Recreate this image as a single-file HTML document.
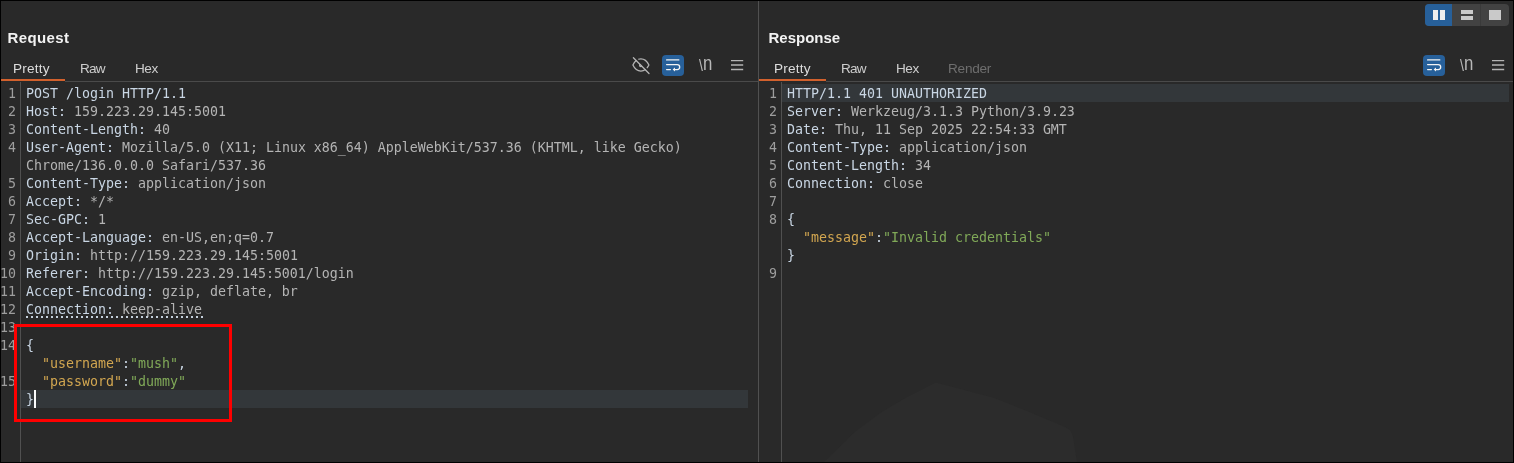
<!DOCTYPE html>
<html lang="en">
<head>
<meta charset="utf-8">
<title>Request / Response</title>
<style>
html,body{margin:0;padding:0;}
body{width:1514px;height:463px;overflow:hidden;background:#000;position:relative;font-family:"Liberation Sans","DejaVu Sans",sans-serif;}
#app{will-change:transform;position:absolute;left:1px;top:1px;width:1512px;height:461px;background:#292929;overflow:hidden;}
.abs{position:absolute;}
.vline{position:absolute;width:1px;background:#505050;}
.hline{position:absolute;height:1px;background:#4a4a4a;}
.title{position:absolute;font-weight:bold;font-size:15px;color:#f2f2f2;line-height:18px;white-space:nowrap;}
.tab{position:absolute;font-size:13.6px;color:#cdcdcd;line-height:16px;white-space:nowrap;letter-spacing:-0.25px;}
.tab.sel{letter-spacing:0.2px;color:#dcdcdc;}
.tab.dis{color:#6e6e6e;}
.orange{position:absolute;height:2px;background:#d2612d;}
.code{position:absolute;font-family:"DejaVu Sans Mono","Liberation Mono",monospace;font-size:13.29px;line-height:18px;white-space:pre;color:#b4b4b4;}
.code .row{height:18px;position:relative;}
.ln{position:absolute;font-family:"DejaVu Sans Mono","Liberation Mono",monospace;font-size:13.29px;line-height:18px;color:#9e9e9e;text-align:right;white-space:pre;}
.ln div{height:18px;}
.ln .dd{position:relative;left:-1px;}
.h{color:#c9d6e4;}
.k{color:#d2a650;}
.s{color:#80a958;}
.p{color:#c9d6e4;}
.hl{position:absolute;height:18px;background:#33373a;}
.dot{}

.ibtn{position:absolute;width:22px;height:21px;border-radius:4px;background:#27609a;}
.nl{position:absolute;width:16px;height:18px;color:#b8b8b8;white-space:nowrap;}
.nl span{position:absolute;display:block;line-height:20px;}
.nl .bs{left:0.9px;top:-1.4px;font-size:16px;transform:scaleX(.88);transform-origin:0 0;}
.nl .n{left:4.7px;top:-3.8px;font-size:20px;transform:scaleX(.84);transform-origin:0 0;}
</style>
</head>
<body>
<div id="app">
  <!-- coordinates inside #app are page coords minus 1 -->
  <!-- faint watermark polygon -->
  <svg class="abs" style="left:0;top:0" width="1512" height="461" viewBox="1 1 1512 461">
    <polygon points="936,382.6 993.6,397.7 1031.3,412.8 1064,426.6 1070,430 1072.8,435.4 1077,462 824,462 855.4,431.6 880.5,412.8 905.6,397.7" fill="#2c2c2c"/>
  </svg>

  <!-- LEFT: Request -->
  <div class="title" style="left:6.6px;top:28.4px;letter-spacing:0.35px;">Request</div>
  <div class="tab sel" style="left:12px;top:59.5px;">Pretty</div>
  <div class="tab" style="left:79px;top:59.5px;letter-spacing:-0.85px;">Raw</div>
  <div class="tab" style="left:134px;top:59.5px;letter-spacing:-0.5px;">Hex</div>
  <div class="hline" style="left:64px;top:80px;width:693px;"></div>
  <div class="orange" style="left:0;top:78px;width:64px;"></div>
  <div class="vline" style="left:19px;top:81px;height:380px;"></div>
  <div class="hl" style="left:20px;top:389px;width:727px;"></div>

  <div class="ln" style="left:0;top:84px;width:15px;"><div>1</div><div>2</div><div>3</div><div>4</div><div> </div><div>5</div><div>6</div><div>7</div><div>8</div><div>9</div><div class="dd">10</div><div class="dd">11</div><div class="dd">12</div><div class="dd">13</div><div class="dd">14</div><div> </div><div class="dd">15</div></div>

  <div class="code" style="left:25px;top:84px;"><div class="row"><span class="h">POST /login HTTP/1.1</span></div><div class="row"><span class="h">Host:</span> 159.223.29.145:5001</div><div class="row"><span class="h">Content-Length:</span> 40</div><div class="row"><span class="h">User-Agent:</span> Mozilla/5.0 (X11; Linux x86_64) AppleWebKit/537.36 (KHTML, like Gecko)</div><div class="row">Chrome/136.0.0.0 Safari/537.36</div><div class="row"><span class="h">Content-Type:</span> application/json</div><div class="row"><span class="h">Accept:</span> */*</div><div class="row"><span class="h">Sec-GPC:</span> 1</div><div class="row"><span class="h">Accept-Language:</span> en-US,en;q=0.7</div><div class="row"><span class="h">Origin:</span> http://159.223.29.145:5001</div><div class="row"><span class="h">Referer:</span> http://159.223.29.145:5001/login</div><div class="row"><span class="h">Accept-Encoding:</span> gzip, deflate, br</div><div class="row"><span class="dot"><span class="h">Connection:</span> keep-alive</span></div><div class="row"></div><div class="row"><span class="p">{</span></div><div class="row">  <span class="k">"username"</span><span class="p">:</span><span class="s">"mush"</span><span class="p">,</span></div><div class="row">  <span class="k">"password"</span><span class="p">:</span><span class="s">"dummy"</span></div><div class="row"><span class="p">}</span></div></div>
  <div class="abs" style="left:33px;top:389px;width:2px;height:18px;background:#fbfbfb;"></div>

  <div class="abs" style="left:25px;top:315px;width:177px;height:2px;background:repeating-linear-gradient(90deg,#c3cfdb 0,#c3cfdb 2px,transparent 2px,transparent 5px);"></div>
  <!-- red annotation box -->
  <div class="abs" style="left:13px;top:323px;width:212px;height:92px;border:3px solid #fe0000;"></div>

  <svg class="abs" style="left:630px;top:55px" width="22" height="21" viewBox="0 0 22 21"><g fill="none" stroke="#b4b4b4" stroke-width="1.3" stroke-linecap="round"><path d="M1.9 9C4 4.6 7 2.9 9.9 2.9S15.8 4.6 17.9 9C15.8 13.4 12.8 15.1 9.9 15.1S4 13.4 1.9 9Z"/><circle cx="9.9" cy="9.2" r="1.3"/><path d="M3.7 1.1L19.6 17.2" stroke="#292929" stroke-width="1.8" stroke-linecap="butt"/><path d="M2.4 1.7L18 17.5"/></g></svg><div class="ibtn" style="left:661px;top:54px;"><svg width="22" height="21" viewBox="0 0 22 21" style="display:block"><g fill="none" stroke="#f4f4f4" stroke-width="1.3" stroke-linecap="round"><path d="M4.6 4.9H16.8"/><path d="M4.6 9.6H15.2A2.5 2.5 0 0 1 15.2 14.6H12.4"/><path d="M4.6 14.6H8.4"/></g><path d="M10.6 14.6L13 12.6V16.6Z" fill="#f4f4f4"/></svg></div><div class="nl" style="left:697px;top:56px;"><span class="bs">\</span><span class="n">n</span></div><svg class="abs" style="left:730px;top:57px" width="13" height="13" viewBox="0 0 13 13"><g stroke="#b4b4b4" stroke-width="1.3"><path d="M0 2.6H12.2M0 7H12.2M0 11.5H12.2"/></g></svg>

  <!-- centre divider -->
  <div class="vline" style="left:757px;top:0;height:461px;"></div>

  <!-- RIGHT: Response -->
  <div class="title" style="left:767.5px;top:28.4px;">Response</div>
  <div class="tab sel" style="left:773px;top:59.5px;">Pretty</div>
  <div class="tab" style="left:840px;top:59.5px;letter-spacing:-0.85px;">Raw</div>
  <div class="tab" style="left:895px;top:59.5px;letter-spacing:-0.5px;">Hex</div>
  <div class="tab dis" style="left:947px;top:59.5px;">Render</div>
  <div class="hline" style="left:825px;top:80px;width:687px;"></div>
  <div class="orange" style="left:758px;top:78px;width:67px;"></div>
  <div class="vline" style="left:780px;top:81px;height:380px;"></div>
  <div class="hl" style="left:781px;top:83px;width:727px;"></div>

  <div class="ln" style="left:758px;top:84px;width:18px;"><div>1</div><div>2</div><div>3</div><div>4</div><div>5</div><div>6</div><div>7</div><div>8</div><div> </div><div> </div><div>9</div></div>

  <div class="code" style="left:786px;top:84px;"><div class="row"><span class="h">HTTP/1.1 401 UNAUTHORIZED</span></div><div class="row"><span class="h">Server:</span> Werkzeug/3.1.3 Python/3.9.23</div><div class="row"><span class="h">Date:</span> Thu, 11 Sep 2025 22:54:33 GMT</div><div class="row"><span class="h">Content-Type:</span> application/json</div><div class="row"><span class="h">Content-Length:</span> 34</div><div class="row"><span class="h">Connection:</span> close</div><div class="row"></div><div class="row"><span class="p">{</span></div><div class="row">  <span class="k">"message"</span><span class="p">:</span><span class="s">"Invalid credentials"</span></div><div class="row"><span class="p">}</span></div><div class="row"></div></div>
  <div class="ibtn" style="left:1422px;top:54px;"><svg width="22" height="21" viewBox="0 0 22 21" style="display:block"><g fill="none" stroke="#f4f4f4" stroke-width="1.3" stroke-linecap="round"><path d="M4.6 4.9H16.8"/><path d="M4.6 9.6H15.2A2.5 2.5 0 0 1 15.2 14.6H12.4"/><path d="M4.6 14.6H8.4"/></g><path d="M10.6 14.6L13 12.6V16.6Z" fill="#f4f4f4"/></svg></div><div class="nl" style="left:1458px;top:56px;"><span class="bs">\</span><span class="n">n</span></div><svg class="abs" style="left:1491px;top:57px" width="13" height="13" viewBox="0 0 13 13"><g stroke="#b4b4b4" stroke-width="1.3"><path d="M0 2.6H12.2M0 7H12.2M0 11.5H12.2"/></g></svg>
  <div class="abs" style="left:1424px;top:3px;width:84px;height:22px;border-radius:4px;overflow:hidden;background:#424242;">
    <div class="abs" style="left:0;top:0;width:27px;height:22px;background:#27609a;"></div>
    <div class="abs" style="left:55px;top:0;width:1px;height:22px;background:#3a3a3a;"></div>
    <div class="abs" style="left:8px;top:6px;width:5px;height:10px;background:#efefef;"></div>
    <div class="abs" style="left:15px;top:6px;width:5px;height:10px;background:#efefef;"></div>
    <div class="abs" style="left:36px;top:6px;width:12px;height:4px;background:#c9c9c9;"></div>
    <div class="abs" style="left:36px;top:12px;width:12px;height:4px;background:#c9c9c9;"></div>
    <div class="abs" style="left:64px;top:6px;width:12px;height:10px;background:#c9c9c9;"></div>
  </div>
</div>
</body>
</html>
